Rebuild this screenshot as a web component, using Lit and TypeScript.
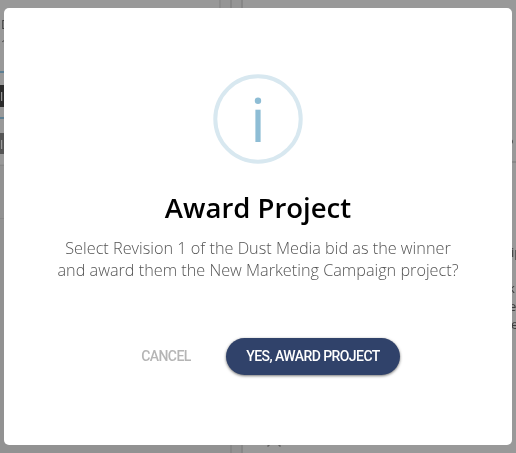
import { LitElement, html, css } from "lit";
import { customElement } from "lit/decorators.js";

@customElement("page-backdrop")
class PageBackdrop extends LitElement {
  static styles = css`
    :host {
      display: grid;
      grid-template-columns: 221px 11px 11px 1fr;
      height: 453px;
      overflow: hidden;
      background: #999;
      color: #3c3c3c;
      font: 13px/18px "Open Sans", sans-serif;
    }
    .side { display: flex; flex-direction: column; background: linear-gradient(#999 0 164px, #929292 164px); }
    .name { height: 18px; margin: 15px 0 0 1px; }
    .count { height: 18px; margin: 2px 0 0 1px; font-size: 11px; }
    .rule { height: 2px; background: #5d7f93; margin-top: 18px; }
    .tag { height: 22px; line-height: 24px; color: #aaa; background: #2b2b2b; margin-top: 12px; font-size: 12px; }
    .tag + .rule { margin-top: 10px; }
    .tag.soft { background: #555; margin-top: 14px; height: 21px; }
    .line { height: 1px; background: #888; margin-top: 11px; }
    .line + .line { margin-top: 52px; }
    .side .top { order: -1; width: 2px; height: 8px; margin-bottom: -8px; align-self: flex-end; background: #8c8c8c; }
    .gap { background: linear-gradient(#959595 0 164px, #929292 164px); border-right: 2px solid #878787; box-sizing: border-box; }
    .main { display: flex; flex-direction: column; align-items: flex-start; }
    .main div { height: 18px; white-space: nowrap; margin-left: 266px; }
    .name, .count, .tag, .main { will-change: transform; }
    .main .head { margin: 134px 0 0 264px; font-size: 10px; font-weight: 700; }
    .main .divider { width: 100%; height: 2px; background: #888; margin: 9px 0 0; }
    .main .first { margin: 80px 0 0 268px; }
    .main .next { margin: 18px 0 0 265px; }
    .main .last { margin-left: 268px; }
    .main svg { display: block; margin: 108px 0 0 22px; }
  `;
  render() {
    return html`
      <div class="side">
        <div class="name">D</div>
        <div class="count">1</div>
        <div class="rule"></div>
        <div class="tag">I</div>
        <div class="rule"></div>
        <div class="tag soft">I</div>
        <div class="line"></div>
        <div class="line"></div>
        <div class="top"></div>
      </div>
      <div class="gap"></div>
      <div class="gap"></div>
      <div class="main">
        <div class="head">P</div>
        <div class="divider"></div>
        <div class="first">ip</div>
        <div class="next">k</div>
        <div>e</div>
        <div class="last">e</div>
        <svg width="18" height="10" viewBox="0 0 18 10" fill="none" stroke="#606060" stroke-width="1.5">
          <path d="M7 1 L2.5 5.5 M11 1 L15.5 5.5" />
        </svg>
      </div>
    `;
  }
}

@customElement("app-root")
class AppRoot extends LitElement {
  static styles = css`
    :host { display: block; position: relative; width: 516px; height: 453px; overflow: hidden; }
    .dialog {
      position: absolute;
      inset: 8px 4px 8px 4px;
      box-sizing: border-box;
      padding-top: 66px;
      border-radius: 5px;
      background: #fff;
      display: flex;
      flex-direction: column;
      align-items: center;
      font-family: "Open Sans", sans-serif;
    }
    .icon { width: 90px; height: 90px; display: block; }
    h2 { margin: 24px 0 0; font-size: 27.5px; line-height: 40px; font-weight: 600; color: #000; white-space: nowrap; }
    p { margin: 9px 0 0; text-align: center; font-size: 16.25px; line-height: 22px; font-weight: 300; color: #545454; white-space: nowrap; }
    .actions { display: flex; align-items: center; margin-top: 57px; width: 100%; box-sizing: border-box; padding-left: 137px; }
    button { border: 0; padding: 0; background: none; font: 500 14px/37px Roboto, sans-serif; letter-spacing: -0.57px; white-space: nowrap; }
    .cancel { width: 50px; color: #b5b5b5; }
    .confirm { width: 174px; height: 37px; margin-left: 35px; border-radius: 19px; background: #30426a; color: #fff; box-shadow: 0 1px 3px rgba(0, 0, 0, 0.55); }
  `;
  render() {
    return html`
      <page-backdrop></page-backdrop>
      <section class="dialog" role="dialog">
        <svg class="icon" viewBox="0 0 90 90">
          <circle cx="45" cy="45" r="42.7" fill="none" stroke="#d8e8f0" stroke-width="4" />
          <circle cx="45" cy="26.8" r="3.2" fill="#8ebdd5" />
          <rect x="42.4" y="35.7" width="5.2" height="32.3" fill="#8ebdd5" />
        </svg>
        <h2>Award Project</h2>
        <p>Select Revision 1 of the Dust Media bid as the winner<br />and award them the New Marketing Campaign project?</p>
        <div class="actions">
          <button class="cancel">CANCEL</button>
          <button class="confirm">YES, AWARD PROJECT</button>
        </div>
      </section>
    `;
  }
}
